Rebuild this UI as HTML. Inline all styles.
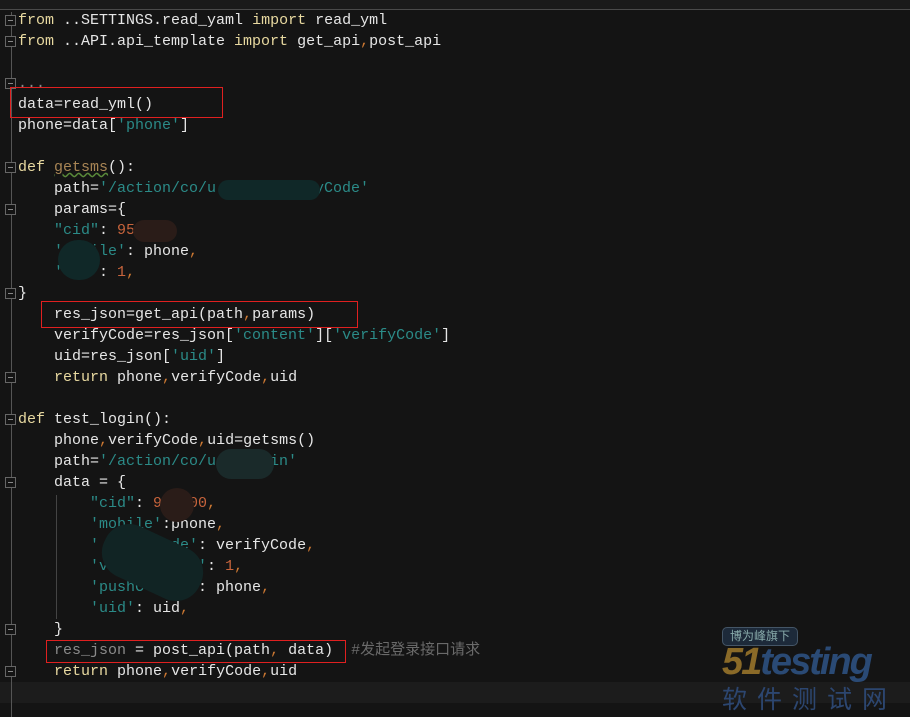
<!DOCTYPE html>
<html><head><meta charset="utf-8"><style>
html,body{margin:0;padding:0;background:#141414;width:910px;height:717px;overflow:hidden;position:relative}
.top{position:absolute;left:0;top:0;width:910px;height:9px;background:#1a1a1a;border-bottom:1px solid #4a4a4a}
.gl{position:absolute;left:11px;top:12px;width:1px;height:705px;background:#555}
.code{position:absolute;left:18px;top:10px;font-family:"Liberation Mono","Noto Sans CJK SC",monospace;font-size:15px;line-height:21px;color:#e6e6e6;white-space:pre}
.k{color:#e8d9a0}.s{color:#2b8b88}.n{color:#c8643c}.c{color:#cc7832}.f{color:#a88555;text-decoration:underline wavy #5a8a3a}.g{color:#6a6a6a}.d{color:#8a8a8a}
.hl{position:absolute;left:0;top:682px;width:910px;height:21px;background:#1c1c1c}
.box{position:absolute;border:1px solid #e02020;}
.blob{position:absolute;border-radius:12px}
.fold{position:absolute;left:5px;width:11px;height:11px;border:1px solid #666;background:#141414;box-sizing:border-box}
.fold:after{content:"";position:absolute;left:2px;top:4px;width:5px;height:1px;background:#888}
.logo{position:absolute;font-family:"Liberation Sans","Noto Sans CJK SC",sans-serif;white-space:nowrap}
</style></head><body>
<div class="top"></div>
<div class="hl"></div>
<div class="gl"></div>
<div class="fold" style="top:15px"></div><div class="fold" style="top:36px"></div><div class="fold" style="top:78px"></div>
<div class="fold" style="top:162px"></div><div class="fold" style="top:204px"></div><div class="fold" style="top:288px"></div>
<div class="fold" style="top:372px"></div><div class="fold" style="top:414px"></div><div class="fold" style="top:477px"></div>
<div class="fold" style="top:624px"></div><div class="fold" style="top:666px"></div>
<div style="position:absolute;left:56px;top:495px;width:1px;height:124px;background:#444"></div>
<div class="code"><span class="k">from</span> ..SETTINGS.read_yaml <span class="k">import</span> read_yml
<span class="k">from</span> ..API.api_template <span class="k">import</span> get_api<span class="c">,</span>post_api

<span class="d">...</span>
data=read_yml()
phone=data[<span class="s">'phone'</span>]

<span class="k">def</span> <span class="f">getsms</span>():
    path=<span class="s">'/action/co/u          fyCode'</span>
    params={
    <span class="s">"cid"</span>: <span class="n">95</span>   <span class="c">,</span>
    <span class="s">'   ile'</span>: phone<span class="c">,</span>
    <span class="s">'   '</span>: <span class="n">1</span><span class="c">,</span>
}
    res_json=get_api(path<span class="c">,</span>params)
    verifyCode=res_json[<span class="s">'content'</span>][<span class="s">'verifyCode'</span>]
    uid=res_json[<span class="s">'uid'</span>]
    <span class="k">return</span> phone<span class="c">,</span>verifyCode<span class="c">,</span>uid

<span class="k">def</span> test_login():
    phone<span class="c">,</span>verifyCode<span class="c">,</span>uid=getsms()
    path=<span class="s">'/action/co/u     gin'</span>
    data = {
        <span class="s">"cid"</span>: <span class="n">9   00</span><span class="c">,</span>
        <span class="s">'mobile'</span>:phone<span class="c">,</span>
        <span class="s">'    fyCode'</span>: verifyCode<span class="c">,</span>
        <span class="s">'ve     Type'</span>: <span class="n">1</span><span class="c">,</span>
        <span class="s">'pushCl    '</span>: phone<span class="c">,</span>
        <span class="s">'uid'</span>: uid<span class="c">,</span>
    }
    <span class="d">res_json</span> = post_api(path<span class="c">,</span> data)  <span class="g">#发起登录接口请求</span>
    <span class="k">return</span> phone<span class="c">,</span>verifyCode<span class="c">,</span>uid</div>
<div class="blob" style="left:218px;top:180px;width:102px;height:20px;background:#102828"></div>
<div class="blob" style="left:133px;top:220px;width:44px;height:22px;background:#2a1c18"></div>
<div class="blob" style="left:58px;top:240px;width:42px;height:40px;background:#102828;border-radius:20px"></div>
<div class="blob" style="left:216px;top:449px;width:58px;height:30px;background:#1a2a2a;border-radius:15px"></div>
<div class="blob" style="left:160px;top:488px;width:34px;height:34px;background:#2a1c18;border-radius:17px"></div>
<div class="blob" style="left:100px;top:535px;width:105px;height:55px;background:#112424;border-radius:26px;transform:rotate(25deg)"></div>
<div class="box" style="left:10px;top:87px;width:211px;height:29px"></div>
<div class="box" style="left:41px;top:301px;width:315px;height:25px"></div>
<div class="box" style="left:46px;top:640px;width:298px;height:21px"></div>
<div class="logo" style="left:722px;top:627px;width:74px;height:17px;border:1px solid #456;border-radius:5px;background:#1d2a3a;color:#8aa;font-size:12px;line-height:17px;text-align:center">博为峰旗下</div>
<div class="logo" style="left:722px;top:642px;font-size:38px;line-height:40px;font-weight:bold;font-style:italic;color:#2a4a75;letter-spacing:-2px"><span style="color:#8a6a28">51</span>testing</div>
<div class="logo" style="left:722px;top:686px;font-size:25px;line-height:28px;color:#2c4670;letter-spacing:10px">软件测试网</div>
</body></html>
